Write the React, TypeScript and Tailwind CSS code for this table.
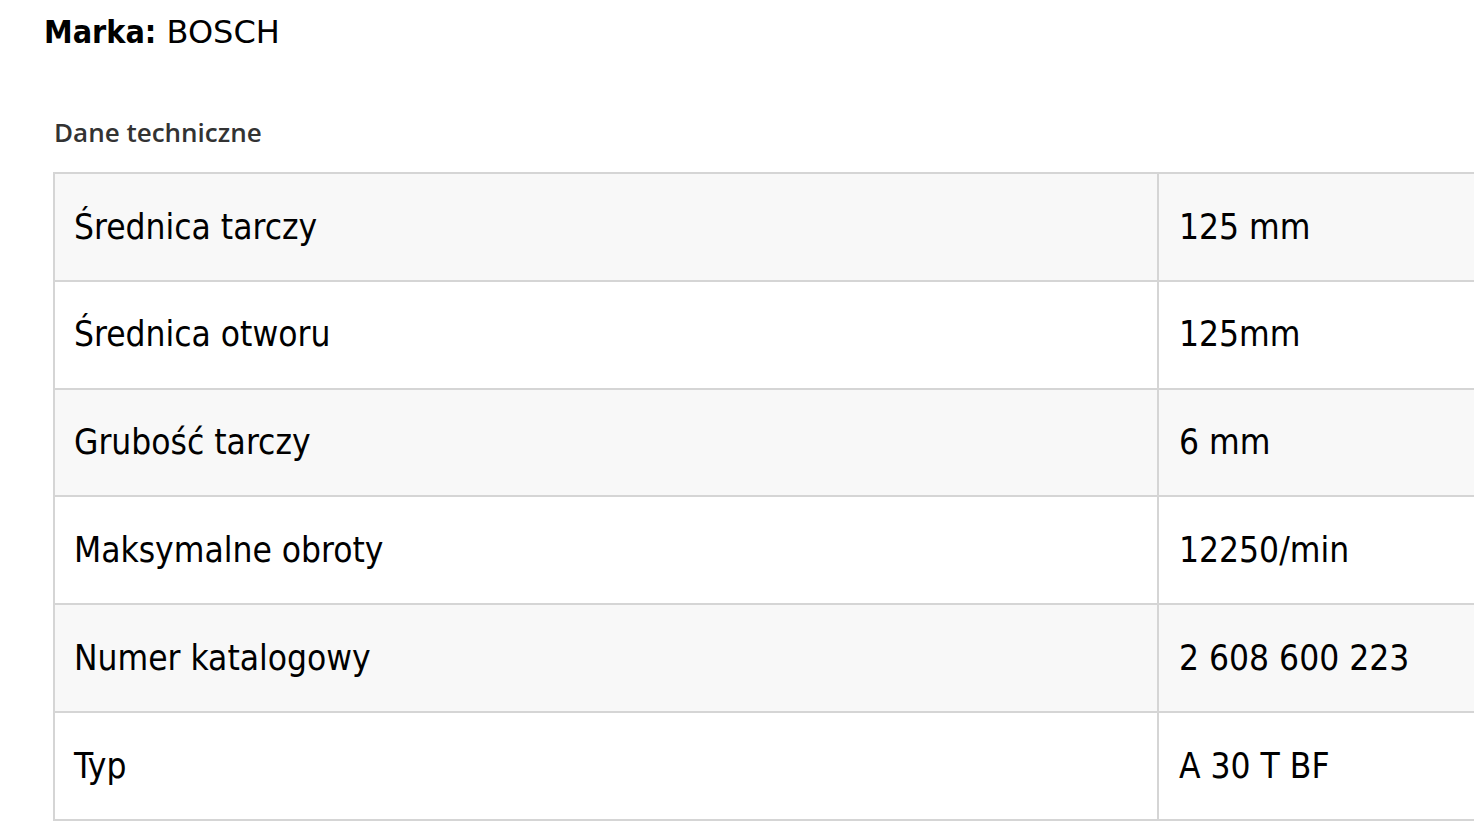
const SPECS = [
  { label: 'Średnica tarczy', value: '125 mm' },
  { label: 'Średnica otworu', value: '125mm' },
  { label: 'Grubość tarczy', value: '6 mm' },
  { label: 'Maksymalne obroty', value: '12250/min' },
  { label: 'Numer katalogowy', value: '2 608 600 223' },
  { label: 'Typ', value: 'A 30 T BF' },
];

export default function App() {
  return (
    <div className="w-[1474px] h-[840px] overflow-hidden bg-white text-black">
      {/* Brand line */}
      <div
        className="pl-[44px] pt-[10px] text-[32px] leading-[44px]"
        style={{ fontFamily: '"DejaVu Sans", Verdana, sans-serif' }}
      >
        <span className="font-bold [font-stretch:condensed]">Marka:</span>{' '}
        <span>BOSCH</span>
      </div>

      {/* Section title */}
      <div
        className="pl-[54px] mt-[63px] text-[26px] font-semibold text-[#333] leading-[30px]"
        style={{ fontFamily: '"Open Sans", sans-serif' }}
      >
        Dane techniczne
      </div>

      {/* Spec table */}
      <div className="pl-[53px] mt-[25px]">
        <table
          className="w-[1480px] border-collapse border-2 border-[#d5d5d5] text-[35px] [font-stretch:condensed]"
          style={{ fontFamily: '"DejaVu Sans", Tahoma, sans-serif' }}
        >
          <tbody>
            {SPECS.map((row, i) => (
              <tr key={row.label} className={i % 2 === 0 ? 'bg-[#f8f8f8]' : 'bg-white'}>
                <td className="w-[1104px] h-[107.8px] border-2 border-[#d5d5d5] pl-[19px] align-middle">
                  {row.label}
                </td>
                <td className="h-[107.8px] border-2 border-[#d5d5d5] pl-[20px] align-middle">
                  {row.value}
                </td>
              </tr>
            ))}
          </tbody>
        </table>
      </div>
    </div>
  );
}
